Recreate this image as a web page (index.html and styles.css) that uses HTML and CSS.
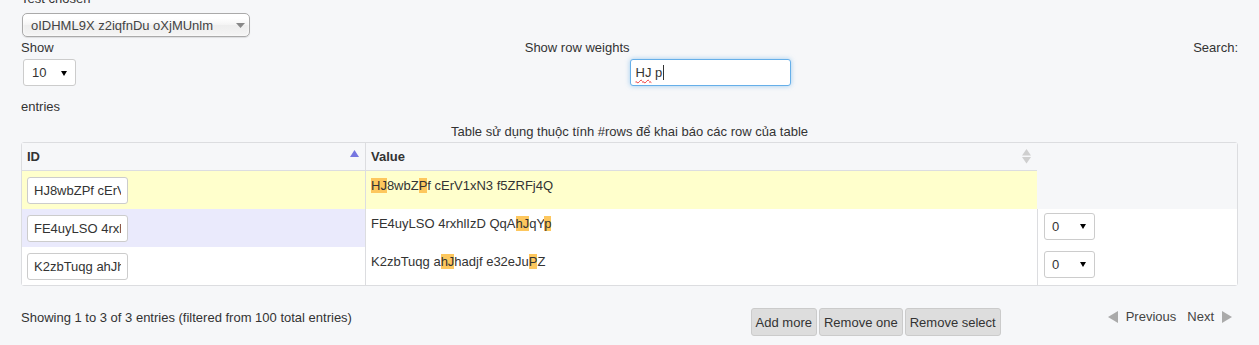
FILE: index.html
```html
<!DOCTYPE html>
<html>
<head>
<meta charset="utf-8">
<link rel="stylesheet" href="styles.css">
</head>
<body>
<div class="page">
  <div class="field-label chosen-label">Test chosen</div>
  <div class="chosen">
    <span>oIDHML9X z2iqfnDu oXjMUnlm</span>
    <svg class="chosen-arrow" width="9" height="6" viewBox="0 0 9 6"><polygon points="0,0 9,0 4.5,5" fill="#888"/></svg>
  </div>

  <div class="controls">
    <div class="controls-left">
      <div class="length">
        <div class="field-label">Show</div>
        <div class="sel length-sel"><span>10</span><svg width="6" height="5" viewBox="0 0 6 5"><polygon points="0,0 6,0 3,5" fill="#000"/></svg></div>
        <div class="field-label entries">entries</div>
      </div>
      <div class="field-label weights-label">Show row weights</div>
    </div>
    <div class="controls-right">
      <div class="search-box"><span class="misspelled">HJ</span>&nbsp;p<span class="caret"></span></div>
      <div class="field-label">Search:</div>
    </div>
  </div>

  <div class="caption">Table sử dụng thuộc tính #rows để khai báo các row của table</div>

  <table class="grid">
    <colgroup>
      <col class="c-id"><col class="c-val"><col class="c-w">
    </colgroup>
    <thead>
      <tr>
        <th class="th-id"><div class="th-inner"><span>ID</span><svg width="9" height="7" viewBox="0 0 9 7"><polygon points="4.5,0 9,7 0,7" fill="#7676e0"/></svg></div></th>
        <th class="th-val"><div class="th-inner"><span>Value</span><svg width="9" height="15" viewBox="0 0 9 15"><polygon points="4.5,0 9,6.5 0,6.5" fill="#cfcfcf"/><polygon points="0,8 9,8 4.5,14.5" fill="#cfcfcf"/></svg></div></th>
        <th class="th-w"></th>
      </tr>
    </thead>
    <tbody>
      <tr class="row-sel">
        <td class="td-id"><input class="id-input" type="text" value="HJ8wbZPf cErV1xN3 f5ZRFj4Q"></td>
        <td class="td-val"><span class="hl">HJ</span>8wbZ<span class="hl">P</span>f cErV1xN3 f5ZRFj4Q</td>
        <td class="td-w td-w-empty"></td>
      </tr>
      <tr class="row-hover">
        <td class="td-id"><input class="id-input" type="text" value="FE4uyLSO 4rxhlIzD QqAhJqYp"></td>
        <td class="td-val">FE4uyLSO 4rxhlIzD QqA<span class="hl">hJ</span>qY<span class="hl">p</span></td>
        <td class="td-w"><div class="sel w-sel"><span>0</span><svg width="6" height="5" viewBox="0 0 6 5"><polygon points="0,0 6,0 3,5" fill="#000"/></svg></div></td>
      </tr>
      <tr>
        <td class="td-id"><input class="id-input" type="text" value="K2zbTuqg ahJhadjf e32eJuPZ"></td>
        <td class="td-val">K2zbTuqg a<span class="hl">hJ</span>hadjf e32eJu<span class="hl">P</span>Z</td>
        <td class="td-w"><div class="sel w-sel"><span>0</span><svg width="6" height="5" viewBox="0 0 6 5"><polygon points="0,0 6,0 3,5" fill="#000"/></svg></div></td>
      </tr>
    </tbody>
  </table>

  <div class="footer">
    <div class="info">Showing 1 to 3 of 3 entries (filtered from 100 total entries)</div>
    <div class="actions">
      <button class="btn">Add more</button>
      <button class="btn">Remove one</button>
      <button class="btn">Remove select</button>
    </div>
    <div class="pager">
      <span class="pg"><svg width="10" height="12" viewBox="0 0 10 12"><polygon points="10,0 10,12 0,6" fill="#aaa"/></svg>Previous</span>
      <span class="pg">Next<svg width="10" height="12" viewBox="0 0 10 12"><polygon points="0,0 10,6 0,12" fill="#aaa"/></svg></span>
    </div>
  </div>
</div>
</body>
</html>
```

FILE: styles.css
```css
html, body {
  margin: 0;
  padding: 0;
  background: #f6f7f9;
  overflow: hidden;
}
body {
  font-family: "Liberation Sans", Arial, sans-serif;
  font-size: 13px;
  line-height: 15px;
  color: #333;
}
.page {
  padding: 0 21px;
}
.field-label {
  line-height: 15px;
}
.chosen-label {
  margin-top: -9px;
}
.chosen {
  margin: 7px 0 0 1px;
  width: 228px;
  height: 24px;
  box-sizing: border-box;
  border: 1px solid #aaa;
  border-radius: 5px;
  background: linear-gradient(#ffffff 20%, #f4f4f4 50%, #eeeeee 52%, #f4f4f4 100%);
  box-shadow: 0 0 3px #fff inset, 0 1px 1px rgba(0,0,0,0.1);
  display: flex;
  align-items: center;
  justify-content: space-between;
  padding: 0 4px 0 8px;
  color: #444;
}
.chosen-arrow {
  margin-top: 1px;
}

.controls {
  display: grid;
  grid-template-columns: 1fr 1fr;
  margin-top: 3px;
}
.controls-left {
  display: flex;
  justify-content: space-between;
  align-items: flex-start;
}
.controls-right {
  display: flex;
  justify-content: space-between;
  align-items: flex-start;
}
.weights-label {
  margin-right: 0;
}
.sel {
  box-sizing: border-box;
  height: 27px;
  border: 1px solid #ccc;
  border-radius: 3px;
  background: #fff;
  display: flex;
  align-items: center;
  justify-content: space-between;
  color: #333;
}
.length-sel {
  margin: 4px 0 0 2px;
  width: 53px;
  padding: 0 8px 0 8px;
}
.length-sel svg { margin-top: 1px; }
.entries {
  margin-top: 13px;
}
.search-box {
  margin-top: 19px;
  width: 161px;
  height: 27px;
  box-sizing: border-box;
  border: 1px solid #66afe9;
  border-radius: 3px;
  background: #fff;
  box-shadow: 0 0 5px rgba(102,175,233,0.6);
  display: flex;
  align-items: center;
  padding: 0 5px;
  color: #333;
}
.misspelled {
  text-decoration: underline wavy #e33;
  text-decoration-thickness: 1px;
  text-underline-offset: 2px;
}
.caret {
  display: inline-block;
  width: 1px;
  height: 15px;
  background: #333;
  margin-left: 1px;
}

.caption {
  text-align: center;
  margin-top: 10px;
  margin-bottom: 3px;
}

.grid {
  width: 100%;
  border-collapse: separate;
  border-spacing: 0;
  border: 1px solid #dcdde0;
  border-radius: 3px;
  table-layout: fixed;
}
.c-id { width: 343px; }
.c-w { width: 200px; }
.grid th {
  text-align: left;
  font-weight: bold;
  height: 28px;
  padding: 0 6px 0 5px;
  box-sizing: border-box;
  background: #f6f7f9;
  vertical-align: middle;
}
.th-id, .th-val {
  border-bottom: 1px solid #dcdde0;
}
.th-val {
  border-left: 1px solid #dcdde0;
}
.th-inner {
  display: flex;
  justify-content: space-between;
  align-items: center;
}
.th-id .th-inner svg { margin-top: -6px; }

.grid td {
  height: 38px;
  box-sizing: border-box;
  padding: 6px 5px 5px 5px;
  vertical-align: top;
  background: #fff;
}
.grid td.td-val {
  padding-top: 7px;
  padding-bottom: 4px;
}
.td-val, .td-w {
  border-left: 1px solid #dcdde0;
}
.row-sel td.td-id, .row-sel td.td-val {
  background: #ffffcc;
}
.row-hover td.td-id {
  background: #eaeafc;
}
.grid td.td-w-empty {
  background: #f6f7f9;
  border-left: none;
}
.grid td.td-w {
  padding-left: 6px;
  padding-top: 4px;
}
.id-input {
  display: block;
  box-sizing: border-box;
  width: 101px;
  height: 27px;
  margin: 0;
  border: 1px solid #ccc;
  border-radius: 3px;
  padding: 0 6px;
  font-family: "Liberation Sans", Arial, sans-serif;
  font-size: 13px;
  color: #333;
  background: #fff;
}
.td-val {
  color: #333;
}
.hl {
  background: #fdc75e;
}
.w-sel {
  width: 51px;
  padding: 0 8px 0 7px;
}

.footer {
  display: flex;
  align-items: flex-start;
}
.info {
  flex: 1;
  margin-top: 24px;
  color: #333;
}
.actions {
  margin-top: 22px;
  margin-right: 107px;
  display: flex;
  gap: 2px;
}
.btn {
  font-family: "Liberation Sans", Arial, sans-serif;
  font-size: 13px;
  line-height: 15px;
  color: #333;
  background: #dddddd;
  border: 1px solid #cbcbcb;
  border-radius: 3px;
  padding: 6px 4px 5px 4px;
  margin: 0;
}
.pager {
  margin-top: 23px;
  margin-right: 6px;
  display: flex;
  gap: 11px;
  color: #444;
}
.pg {
  display: flex;
  align-items: center;
  gap: 8px;
}
```
